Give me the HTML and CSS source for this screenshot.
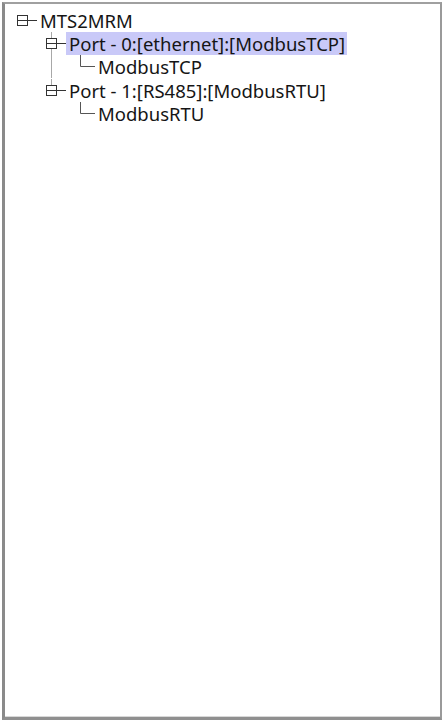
FILE: index.html
```html
<!DOCTYPE html>
<html>
<head>
<meta charset="utf-8">
<link rel="stylesheet" href="styles.css">
</head>
<body>
<div class="panel">
  <div class="tree">
    <div class="row">
      <svg class="cell" width="20" height="23" viewBox="0 0 20 23">
        <rect x="0.5" y="6.5" width="10" height="10" fill="#fff" stroke="#333"/>
        <line x1="1" y1="11.5" x2="20" y2="11.5" stroke="#333"/>
      </svg>
      <span class="label">MTS2MRM</span>
    </div>
    <div class="row">
      <span class="indent"></span>
      <svg class="cell" width="20" height="23" viewBox="0 0 20 23">
        <line x1="5.5" y1="0" x2="5.5" y2="23" stroke="#a8a8a8"/>
        <rect x="0.5" y="6.5" width="10" height="10" fill="#fff" stroke="#333"/>
        <line x1="1" y1="11.5" x2="20" y2="11.5" stroke="#333"/>
      </svg>
      <span class="label selected">Port - 0:[ethernet]:[ModbusTCP]</span>
    </div>
    <div class="row">
      <span class="indent"></span>
      <svg class="indent" width="29" height="23" viewBox="0 0 29 23">
        <line x1="5.5" y1="0" x2="5.5" y2="23" stroke="#a8a8a8"/>
      </svg>
      <svg class="cell" width="20" height="23" viewBox="0 0 20 23">
        <polyline points="5.5,0 5.5,11.5 20,11.5" fill="none" stroke="#555"/>
      </svg>
      <span class="label">ModbusTCP</span>
    </div>
    <div class="row">
      <span class="indent"></span>
      <svg class="cell" width="20" height="23" viewBox="0 0 20 23">
        <line x1="5.5" y1="0" x2="5.5" y2="7" stroke="#a8a8a8"/>
        <rect x="0.5" y="6.5" width="10" height="10" fill="#fff" stroke="#333"/>
        <line x1="1" y1="11.5" x2="20" y2="11.5" stroke="#333"/>
      </svg>
      <span class="label">Port - 1:[RS485]:[ModbusRTU]</span>
    </div>
    <div class="row">
      <span class="indent"></span>
      <span class="indent"></span>
      <svg class="cell" width="20" height="23" viewBox="0 0 20 23">
        <polyline points="5.5,0 5.5,11.5 20,11.5" fill="none" stroke="#555"/>
      </svg>
      <span class="label">ModbusRTU</span>
    </div>
  </div>
</div>
</body>
</html>
```

FILE: styles.css
```css
html, body {
  margin: 0;
  padding: 0;
  background: #ffffff;
}
body {
  width: 444px;
  height: 722px;
  overflow: hidden;
}
.panel {
  box-sizing: border-box;
  margin: 2px 2px 0 2px;
  width: 440px;
  height: 718px;
  border-top: 2px solid #a0a0a0;
  border-left: 3px solid #8a8a8a;
  border-right: 2px solid #9a9a9a;
  border-bottom: 3px solid #8f8f8f;
  box-shadow: inset 0 -1px 0 #d8d8d8;
  background: #fff;
}
.tree {
  padding: 5px 0 0 12px;
  font-family: "Noto Sans", "Open Sans", sans-serif;
  font-size: 18.5px;
  color: #151515;
}
.row {
  display: flex;
  align-items: center;
  height: 23.2px;
}
.indent {
  flex: 0 0 29px;
  width: 29px;
  height: 23px;
  display: block;
}
.cell {
  flex: 0 0 20px;
  display: block;
}
.label {
  padding: 0 2px 0 3px;
  height: 23px;
  line-height: 23px;
  white-space: nowrap;
}
.selected {
  background: #c9c9f8;
}
```
